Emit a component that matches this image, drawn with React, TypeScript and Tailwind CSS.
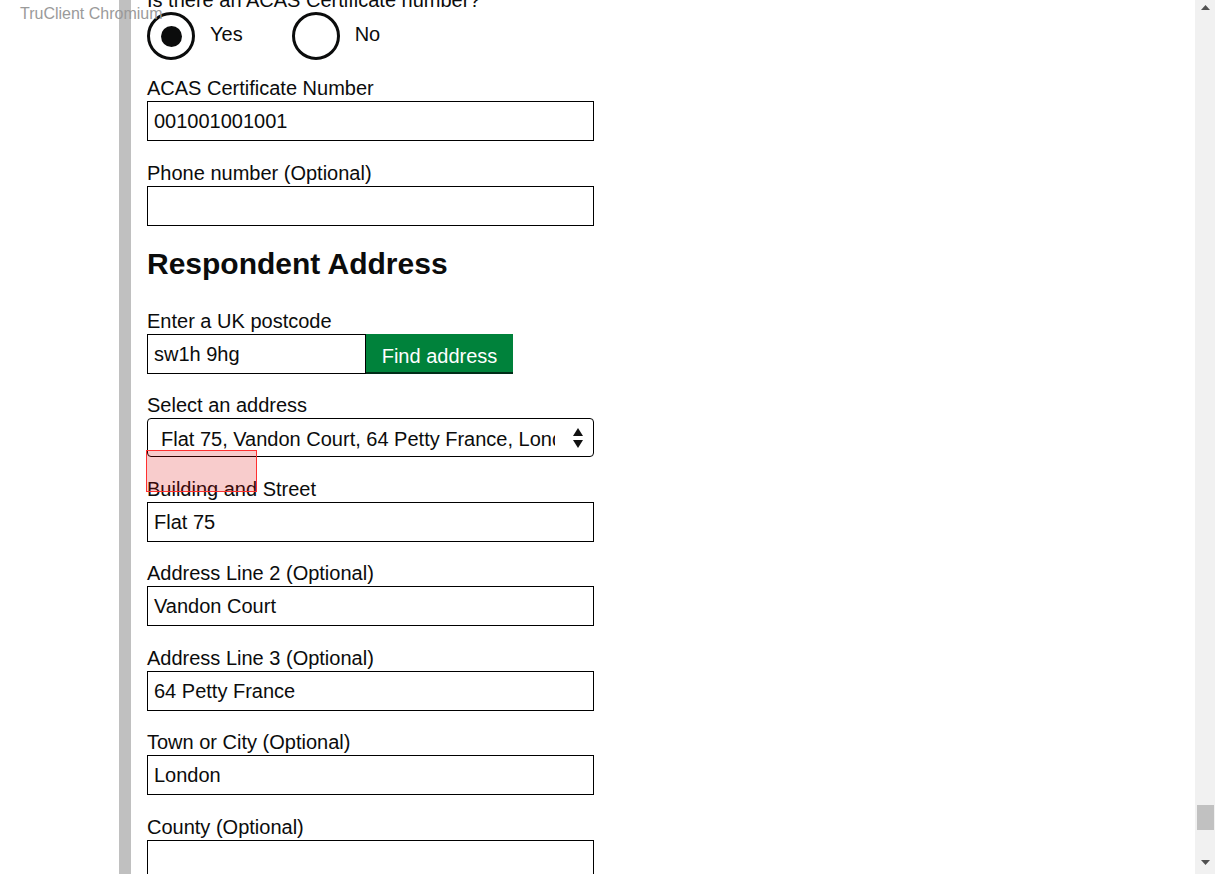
import React from "react";

const font = { fontFamily: '"Liberation Sans", Arial, sans-serif' };

function Field({ label, value }: { label: string; value?: string }) {
  return (
    <div className="mb-[19.5px]">
      <label className="block text-[20px] leading-[25px] text-[#0b0c0c]">{label}</label>
      <div className="w-[447px] h-[40px] border border-black px-[6px] flex items-center text-[20px] text-[#0b0c0c]">
        {value}
      </div>
    </div>
  );
}

function Radio({ label, checked }: { label: string; checked?: boolean }) {
  return (
    <div className="flex items-center">
      <div className="w-[48px] h-[48px] rounded-full border-[3px] border-[#0b0c0c] flex items-center justify-center">
        {checked && <div className="w-[21px] h-[21px] rounded-full bg-[#0b0c0c]" />}
      </div>
      <span className="ml-[15px] text-[20px] leading-[25px] text-[#0b0c0c] -mt-[4px]">{label}</span>
    </div>
  );
}

export default function App() {
  return (
    <div className="relative w-[1215px] h-[874px] overflow-hidden bg-white flex" style={font}>
      <div className="w-[119px] shrink-0" />
      <div className="flex-1 border-l-[12px] border-[#c0c0c0] pl-[16px]">
        <div className="-mt-[12px]">
          <div className="text-[20px] leading-[25px] text-[#0b0c0c] h-[24px]">
            Is there an ACAS Certificate number?
          </div>
          <div className="flex gap-[49px] mb-[16px]">
            <Radio label="Yes" checked />
            <Radio label="No" />
          </div>
          <Field label="ACAS Certificate Number" value="001001001001" />
          <Field label="Phone number (Optional)" />
          <h2 className="text-[30px] leading-[37px] font-bold text-[#0b0c0c] mt-[-0.5px] mb-[27px]">
            Respondent Address
          </h2>
          <div className="mb-[19.5px]">
            <label className="block text-[20px] leading-[25px] text-[#0b0c0c]">Enter a UK postcode</label>
            <div className="flex">
              <div className="w-[219px] h-[40px] border border-black px-[6px] flex items-center text-[20px] text-[#0b0c0c]">
                sw1h 9hg
              </div>
              <button className="w-[147px] h-[40px] bg-[#00823b] text-white text-[20px] shadow-[inset_0_-2px_0_#002d18] pt-[4px] flex items-center justify-center">
                Find address
              </button>
            </div>
          </div>
          <div className="mb-[19.5px]">
            <label className="block text-[20px] leading-[25px] text-[#0b0c0c]">Select an address</label>
            <div className="relative w-[447px] h-[39px] border border-black rounded-[4px] flex items-center pl-[13px] pt-[2px] text-[20px] text-[#0b0c0c]">
              <span className="block w-[394px] overflow-hidden whitespace-nowrap">
                Flat 75, Vandon Court, 64 Petty France, London, SW1H 9HG
              </span>
              <svg className="absolute right-[10px] top-[9px]" width="10" height="20" viewBox="0 0 10 20">
                <path d="M5 0 L10 8 L0 8 Z M0 12 L10 12 L5 20 Z" fill="#111" />
              </svg>
            </div>
          </div>
          <Field label="Building and Street" value="Flat 75" />
          <Field label="Address Line 2 (Optional)" value="Vandon Court" />
          <Field label="Address Line 3 (Optional)" value="64 Petty France" />
          <Field label="Town or City (Optional)" value="London" />
          <Field label="County (Optional)" />
        </div>
      </div>
      <div className="w-[20px] shrink-0 bg-[#f1f1f1] relative">
        <svg className="absolute left-[6px] top-[5px]" width="9" height="5" viewBox="0 0 9 5">
          <path d="M4.5 0 L9 5 L0 5 Z" fill="#505050" />
        </svg>
        <div className="absolute left-[2px] top-[805px] w-[17px] h-[25px] bg-[#c1c1c1]" />
        <svg className="absolute left-[6px] top-[860px]" width="9" height="5" viewBox="0 0 9 5">
          <path d="M0 0 L9 0 L4.5 5 Z" fill="#505050" />
        </svg>
      </div>
      <div className="absolute left-[146px] top-[450px] w-[111px] h-[42px] border border-[#ff3030] bg-[rgba(220,0,0,0.2)]" />
      <div className="absolute left-[20px] top-[4px] text-[16px] leading-[20px] text-[#9a9a9a]">TruClient Chromium</div>
    </div>
  );
}
